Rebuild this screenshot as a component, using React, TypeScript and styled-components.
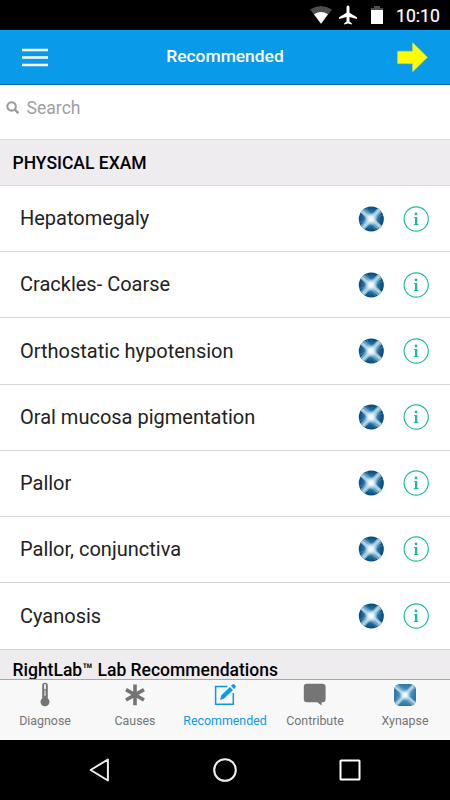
import React, { useId } from "react";
import styled, { createGlobalStyle } from "styled-components";

const Global = createGlobalStyle`
  * { box-sizing: border-box; }
  body { margin: 0; background: #fff; font-family: Roboto, "Noto Sans", sans-serif; }
  svg { display: block; flex: none; }
`;

const Screen = styled.div`
  width: 450px;
  height: 800px;
  display: flex;
  flex-direction: column;
  overflow: hidden;
  background: #fff;
`;

const StatusBar = styled.div`
  flex: none;
  height: 30px;
  background: #000;
  display: flex;
  align-items: center;
  justify-content: flex-end;
  padding-right: 9px;
`;

const Clock = styled.span`
  color: #fff;
  font-size: 17.6px;
  font-weight: 400;
  line-height: 30px;
  margin-left: 10px;
  width: 45px;
  padding-top: 2px;
  white-space: nowrap;
  -webkit-text-stroke: 0.2px #fff;
`;

const Header = styled.header`
  flex: none;
  height: 55px;
  background: #0a9aea;
  border-top: 1px solid #079ffa;
  border-bottom: 1px solid #0868b0;
  display: grid;
  grid-template-columns: 60px 1fr 60px;
  align-items: center;
  padding: 0 14px;
`;

const Title = styled.h1`
  margin: 0;
  color: #fff;
  font-size: 17.4px;
  font-weight: 500;
  text-align: center;
  line-height: 50px;
  padding-bottom: 3px;
`;

const IconButton = styled.button<{ $end?: boolean }>`
  border: 0;
  padding: 0 8px;
  background: none;
  display: flex;
  justify-content: ${(p) => (p.$end ? "flex-end" : "flex-start")};
`;

const SearchBar = styled.label`
  flex: none;
  height: 55px;
  border-bottom: 1px solid #dcdcdc;
  display: flex;
  align-items: flex-start;
  padding: 12px 6px 0;
  gap: 6.5px;
  color: #a0a0a0;
  font-size: 17.6px;
  line-height: 22px;
  svg { margin-top: 4px; }
`;

const List = styled.main`
  flex: 1;
  min-height: 0;
  overflow: hidden;
`;

const SectionTitle = styled.h2`
  margin: 0;
  height: 46px;
  padding-left: 12.5px;
  background: #eeecee;
  border-bottom: 1px solid #d8d8d8;
  color: #000;
  font-size: 17.5px;
  font-weight: 500;
  line-height: 47px;
  white-space: nowrap;
`;

const NextSectionTitle = styled(SectionTitle)`
  height: 30px;
  border: 0;
  border-top: 1px solid #d4d4d4;
  line-height: 40px;
`;

const Row = styled.div`
  height: 66.2px;
  border-bottom: 1.5px solid #d8d8d8;
  display: flex;
  align-items: center;
  padding: 0 21px 0 20px;
  &:last-of-type { border-bottom: 0; }
`;

const RowLabel = styled.span`
  flex: 1;
  color: #222;
  font-size: 20px;
  line-height: 24px;
  padding-bottom: 0.6px;
`;

const RowActions = styled.div`
  display: flex;
  align-items: center;
  gap: 19px;
  padding-bottom: 0.2px;
`;

const TabBar = styled.nav`
  flex: none;
  height: 61px;
  background: #f8f8f8;
  border-top: 1px solid #a8a8a8;
  display: grid;
  grid-template-columns: repeat(5, 1fr);
`;

const Tab = styled.div<{ $active?: boolean }>`
  display: flex;
  flex-direction: column;
  align-items: center;
  color: ${(p) => (p.$active ? "#0e98ea" : "#757575")};
  font-size: 12.4px;
  line-height: 16px;
  gap: 5px;
  padding-top: 2px;
  white-space: nowrap;
`;

const NavBar = styled.div`
  flex: none;
  height: 60px;
  background: #000;
  display: grid;
  grid-template-columns: repeat(3, 125px);
  justify-content: center;
  align-items: center;
  justify-items: center;
`;

function Synapse({ size, rounded }: { size: number; rounded?: boolean }) {
  const id = useId().replace(/\W/g, "");
  return (
    <svg width={size} height={size} viewBox="0 0 26 26">
      <defs>
        <clipPath id={`c${id}`}>
          {rounded ? <rect width="26" height="26" rx="7" /> : <circle cx="13.3" cy="13" r="12.5" />}
        </clipPath>
        <radialGradient id={`b${id}`}>
          <stop offset="0" stopColor={rounded ? "#75b4d4" : "#5b9fc8"} />
          <stop offset="0.6" stopColor={rounded ? "#3f8db4" : "#206c9f"} />
          <stop offset="1" stopColor={rounded ? "#2d789f" : "#064574"} />
        </radialGradient>
        <radialGradient id={`g${id}`}>
          <stop offset="0" stopColor="#fff" />
          <stop offset="0.35" stopColor="#ebf5fa" stopOpacity="0.95" />
          <stop offset="1" stopColor="#b7dced" stopOpacity="0" />
        </radialGradient>
      </defs>
      <g clipPath={`url(#c${id})`}>
        <rect width="26" height="26" fill={`url(#b${id})`} />
        <path d="M0 0 26 26M26 0 0 26" stroke="#84b4cf" strokeWidth="6" opacity=".8" />
        <path d="M1 3 13 13 24 1M2 25 13 13 25 23" fill="none" stroke="#bddbe9" strokeWidth="2.8" opacity=".8" />
        <path d="M8 1 12 8M18 25 14 18M1 17 8 14M25 9 18 12" stroke="#5fa3c7" strokeWidth="1.3" opacity=".45" />
        <circle cx="13" cy="13" r="7" fill={`url(#g${id})`} />
      </g>
    </svg>
  );
}

const InfoIcon = () => (
  <svg width="26" height="26" viewBox="0 0 26 26">
    <circle cx="13.2" cy="13" r="12.1" fill="none" stroke="#1bbc9b" strokeWidth="1.15" />
    <circle cx="13" cy="8" r="1.4" fill="#1bbc9b" />
    <path d="M11 11h3.3v6.8l1.1.4v.7h-4.6v-.7l1.2-.4v-5.6l-1-.4Z" fill="#1bbc9b" />
  </svg>
);

const findings = [
  "Hepatomegaly",
  "Crackles- Coarse",
  "Orthostatic hypotension",
  "Oral mucosa pigmentation",
  "Pallor",
  "Pallor, conjunctiva",
  "Cyanosis",
];

const tabs = [
  {
    label: "Diagnose",
    icon: (
      <svg width="24" height="26" viewBox="0 0 24 26">
        <path d="M9.2 3.5a2.8 2.8 0 0 1 5.6 0v12.8a4.5 4.5 0 1 1-5.6 0Z" fill="#757575" />
        <path d="M12 3v3.5" stroke="#f8f8f8" strokeWidth="1.8" strokeLinecap="round" />
        <path d="M12 8.5V14" stroke="#ddd" strokeWidth="1.3" />
      </svg>
    ),
  },
  {
    label: "Causes",
    icon: (
      <svg width="24" height="26" viewBox="0 0 24 26">
        <path d="M12 2.4v20.8M3 7.6l18 10.4M3 18 21 7.6" stroke="#757575" strokeWidth="3.6" />
      </svg>
    ),
  },
  {
    label: "Recommended",
    icon: (
      <svg width="24" height="26" viewBox="0 0 24 26">
        <path d="M14.5 4.5H2.6v17.7h17.7V11" fill="none" stroke="#0e98ea" strokeWidth="1.5" />
        <path d="m7 18 1.3-4.7L17 5l3 3-8.8 8.5ZM18 4l1.4-1.4a1.4 1.4 0 0 1 2 0l1 1a1.4 1.4 0 0 1 0 2L21 7Z" fill="#0e98ea" />
      </svg>
    ),
  },
  {
    label: "Contribute",
    icon: (
      <svg width="24" height="26" viewBox="0 0 24 26">
        <path d="M4 1.8h15.4a3.2 3.2 0 0 1 3.2 3.2v12a3.2 3.2 0 0 1-3.2 3.2h-.8v3.3l-4.4-3.3H4A3.2 3.2 0 0 1 .8 17V5A3.2 3.2 0 0 1 4 1.8Z" fill="#757575" />
      </svg>
    ),
  },
  { label: "Xynapse", icon: <Synapse size={22} rounded /> },
];

const TabIcon = styled.div`
  height: 26px;
  display: flex;
  align-items: center;
`;

export default function App() {
  return (
    <Screen>
      <Global />
      <StatusBar>
        <svg width="76" height="30" viewBox="0 0 76 30">
          <path d="M0 9.6Q11 2.4 22 9.6L11 23.8Z" fill="#4d4d4d" />
          <path d="M4 14.3Q11 9.6 18 14.3L11 23.8Z" fill="#fff" />
          <path d="M38 5.5c-1 0-1.5 1-1.5 2v5.2L29 17.2v1.9l7.5-2.2v4.7l-2.3 1.7v1.3l3.8-1 3.8 1v-1.3l-2.3-1.7v-4.7l7.5 2.2v-1.9l-7.5-4.5V7.5c0-1-.5-2-1.5-2Z" fill="#fff" />
          <path d="M61 8h3V6h6v2h3v2.5H61Z" fill="#4d4d4d" />
          <path d="M61 10h12v14H61Z" fill="#fff" />
        </svg>
        <Clock>10:10</Clock>
      </StatusBar>
      <Header>
        <IconButton aria-label="Menu">
          <svg width="26" height="20" viewBox="0 0 26 20">
            <path d="M0 2h26M0 9.5h26M0 17h26" stroke="#fff" strokeWidth="2.5" />
          </svg>
        </IconButton>
        <Title>Recommended</Title>
        <IconButton $end aria-label="Next">
          <svg width="31" height="31" viewBox="0 0 31 31">
            <path d="M.5 9.2h15V.5L30.5 15.2 15.5 30V21.7H.5Z" fill="#fffb00" stroke="#a9cf75" strokeWidth=".6" />
          </svg>
        </IconButton>
      </Header>
      <SearchBar>
        <svg width="14" height="14" viewBox="0 0 14 14">
          <circle cx="5.6" cy="5.4" r="4.2" fill="none" stroke="#999" strokeWidth="2.1" />
          <path d="m8.7 8.5 3.6 3.7" stroke="#999" strokeWidth="2.5" />
        </svg>
        Search
      </SearchBar>
      <List>
        <SectionTitle>PHYSICAL EXAM</SectionTitle>
        {findings.map((name) => (
          <Row key={name}>
            <RowLabel>{name}</RowLabel>
            <RowActions>
              <Synapse size={26} />
              <InfoIcon />
            </RowActions>
          </Row>
        ))}
        <NextSectionTitle>RightLab™ Lab Recommendations</NextSectionTitle>
      </List>
      <TabBar>
        {tabs.map((t) => (
          <Tab key={t.label} $active={t.label === "Recommended"}>
            <TabIcon>{t.icon}</TabIcon>
            {t.label}
          </Tab>
        ))}
      </TabBar>
      <NavBar>
        <svg width="26" height="26" viewBox="0 0 26 26">
          <path d="M20.9 2.5v21L3.6 13Z" fill="none" stroke="#eee" strokeWidth="2" strokeLinejoin="round" />
        </svg>
        <svg width="26" height="26" viewBox="0 0 26 26">
          <circle cx="13" cy="13" r="10.8" fill="none" stroke="#eee" strokeWidth="2.1" />
        </svg>
        <svg width="26" height="26" viewBox="0 0 26 26">
          <rect x="3.5" y="3.5" width="19" height="19" rx=".6" fill="none" stroke="#fff" strokeWidth="2" />
        </svg>
      </NavBar>
    </Screen>
  );
}
